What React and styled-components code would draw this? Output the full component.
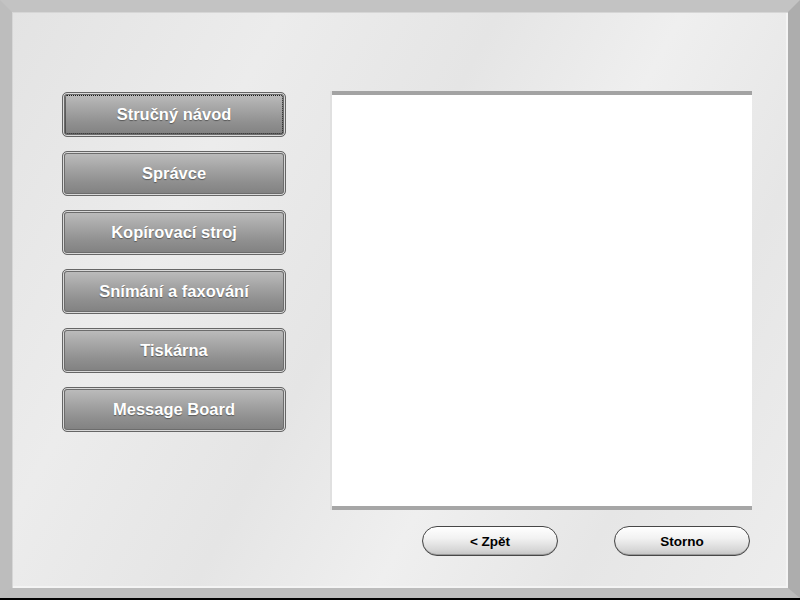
import styled, { createGlobalStyle } from 'styled-components';

const menuItems = [
  'Stručný návod',
  'Správce',
  'Kopírovací stroj',
  'Snímání a faxování',
  'Tiskárna',
  'Message Board',
];

function App() {
  return (
    <>
      <GlobalStyle />
      <Frame>
        <Panel>
          <MainRow>
            <Menu>
              {menuItems.map((item, i) => (
                <MenuButton key={item} $focused={i === 0}>
                  {item}
                </MenuButton>
              ))}
            </Menu>
            <ContentBox />
          </MainRow>
          <Footer>
            <PillButton>&lt; Zpět</PillButton>
            <PillButton>Storno</PillButton>
          </Footer>
        </Panel>
      </Frame>
    </>
  );
}

const GlobalStyle = createGlobalStyle`
  html, body {
    margin: 0;
    padding: 0;
    background: #000;
  }
  * {
    box-sizing: border-box;
  }
`;

const Frame = styled.div`
  width: 800px;
  height: 598px;
  border-style: solid;
  border-width: 12px 12px 10px 12px;
  border-color: #c3c3c3 #adadad #bcbcbc #bdbdbd;
  font-family: 'Liberation Sans', Arial, sans-serif;
`;

const Panel = styled.div`
  width: 100%;
  height: 100%;
  padding: 79px 36px 0 50px;
  background: linear-gradient(
    118deg,
    #e3e3e3 0%,
    #ececec 25%,
    #e5e5e5 45%,
    #efefef 62%,
    #e6e6e6 80%,
    #ededed 100%
  );
  box-shadow: inset 1px 1px 0 #d6d6d6, inset -2px -2px 0 #f4f4f4;
`;

const MainRow = styled.div`
  display: flex;
  justify-content: space-between;
`;

const Menu = styled.div`
  display: flex;
  flex-direction: column;
  gap: 14px;
  width: 224px;
  margin-top: 1px;
`;

const MenuButton = styled.div`
  height: 45px;
  display: flex;
  align-items: center;
  justify-content: center;
  border: 1px solid #666;
  border-radius: 5px;
  background: linear-gradient(#bebebe 0%, #a6a6a6 35%, #8f8f8f 70%, #808080 100%);
  box-shadow: inset 0 0 0 1px #d9d9d9, inset 0 0 0 2px #6c6c6c;
  color: #fff;
  font-size: 16.5px;
  font-weight: 700;
  text-shadow: 0 1px 1px rgba(0, 0, 0, 0.4);
  outline: ${(props) => (props.$focused ? '1px dotted #1a1a1a' : 'none')};
  outline-offset: -4px;
`;

const ContentBox = styled.div`
  width: 420px;
  height: 419px;
  background: #fff;
  border-top: 4px solid #a3a3a3;
  border-bottom: 4px solid #a6a6a6;
  box-shadow: -2px 0 0 #e0e0e0;
`;

const Footer = styled.div`
  display: flex;
  justify-content: flex-end;
  gap: 56px;
  margin-top: 16px;
  padding-right: 2px;
`;

const PillButton = styled.div`
  width: 136px;
  height: 30px;
  display: flex;
  align-items: center;
  justify-content: center;
  border: 1px solid #474747;
  border-radius: 15px;
  background: linear-gradient(#ffffff 0%, #f2f2f2 40%, #d8d8d8 80%, #c4c4c4 100%);
  box-shadow: inset 0 -1px 0 #9a9a9a;
  color: #000;
  font-size: 13.5px;
  font-weight: 700;
`;

export default App;
